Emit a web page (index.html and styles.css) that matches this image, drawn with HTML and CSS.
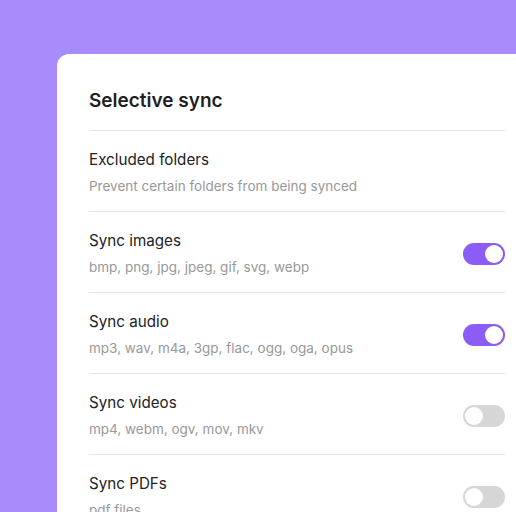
FILE: index.html
```html
<!DOCTYPE html>
<html>
<head>
	<meta charset="utf-8">
	<title>Selective sync</title>
	<link rel="stylesheet" href="styles.css">
</head>
<body>
<div class="panel">
	<h2 class="title">Selective sync</h2>
	<ul class="list">
		<li class="item">
			<div class="info">
				<div class="name">Excluded folders</div>
				<div class="desc">Prevent certain folders from being synced</div>
			</div>
		</li>
		<li class="item">
			<div class="info">
				<div class="name">Sync images</div>
				<div class="desc">bmp, png, jpg, jpeg, gif, svg, webp</div>
			</div>
			<span class="toggle on"><i></i></span>
		</li>
		<li class="item">
			<div class="info">
				<div class="name">Sync audio</div>
				<div class="desc">mp3, wav, m4a, 3gp, flac, ogg, oga, opus</div>
			</div>
			<span class="toggle on"><i></i></span>
		</li>
		<li class="item">
			<div class="info">
				<div class="name">Sync videos</div>
				<div class="desc">mp4, webm, ogv, mov, mkv</div>
			</div>
			<span class="toggle"><i></i></span>
		</li>
		<li class="item">
			<div class="info">
				<div class="name">Sync PDFs</div>
				<div class="desc">pdf files</div>
			</div>
			<span class="toggle"><i></i></span>
		</li>
	</ul>
</div>
</body>
</html>
```

FILE: styles.css
```css
* {
	margin: 0;
	padding: 0;
	box-sizing: border-box;
}
body {
	background: #a78bfa;
	font-family: Inter, "Noto Sans", sans-serif;
	color: #222;
	overflow: hidden;
	height: 512px;
}
.panel {
	width: 480px;
	margin: 54px 0 0 57px;
	padding: 33px 32px 0 32px;
	background: #fff;
	border-radius: 12px 12px 0 0;
	min-height: 600px;
}
.title {
	font-size: 19px;
	font-weight: 600;
	line-height: 28px;
	margin-bottom: 15px;
	color: #1f1f1f;
}
.list {
	list-style: none;
}
.item {
	display: flex;
	align-items: center;
	border-top: 1px solid #e4e4e4;
	padding: 19px 0 16px 0;
}
.info {
	flex: 1;
}
.name {
	font-size: 15.2px;
	line-height: 20px;
	color: #222;
}
.desc {
	font-size: 13.5px;
	line-height: 18px;
	color: #999;
	margin-top: 7px;
}
/* 开关 */
.toggle {
	width: 42px;
	height: 22px;
	border-radius: 11px;
	background: #d6d6d6;
	padding: 2px;
	display: flex;
}
.toggle i {
	width: 18px;
	height: 18px;
	border-radius: 50%;
	background: #fff;
}
.toggle.on {
	background: #8b5cf6;
	justify-content: flex-end;
}
```
